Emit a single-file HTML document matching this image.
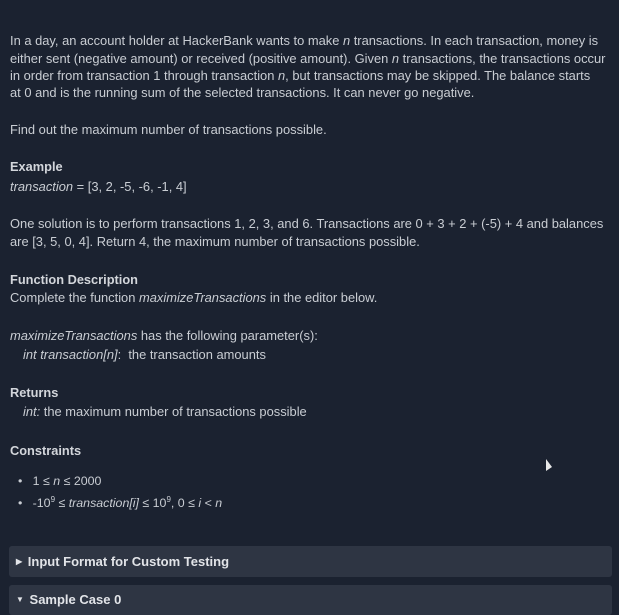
<!DOCTYPE html>
<html><head><style>
body{margin:0;width:619px;height:605px;background:#1b2230;overflow:hidden;font-family:"Liberation Sans",sans-serif;color:#c9cdd3;font-size:12.9px;position:relative}
.l{position:absolute;left:10px;white-space:nowrap;line-height:16px}
.b{font-weight:bold;color:#d3d6db;font-size:12.8px}
i{font-style:italic}
.box{position:absolute;left:9px;width:603px;background:#2e3543;border-radius:3px}
.bt{position:absolute;left:16px;font-weight:bold;color:#e2e4e8;font-size:13px;white-space:nowrap}
.ar{display:inline-block;font-size:8px;vertical-align:2px;margin-right:2px}
sup{font-size:8px;vertical-align:5px;line-height:0}
</style></head><body>
<div class="l" style="top:33px">In a day, an account holder at HackerBank wants to make <i>n</i> transactions. In each transaction, money is</div>
<div class="l" style="top:51px">either sent (negative amount) or received (positive amount). Given <i>n</i> transactions, the transactions occur</div>
<div class="l" style="top:68px">in order from transaction 1 through transaction <i>n</i>, but transactions may be skipped. The balance starts</div>
<div class="l" style="top:85px">at 0 and is the running sum of the selected transactions. It can never go negative.</div>
<div class="l" style="top:122px">Find out the maximum number of transactions possible.</div>
<div class="l b" style="top:159px">Example</div>
<div class="l" style="top:179px"><i>transaction</i> = [3, 2, -5, -6, -1, 4]</div>
<div class="l" style="top:216px">One solution is to perform transactions 1, 2, 3, and 6. Transactions are 0 + 3 + 2 + (-5) + 4 and balances</div>
<div class="l" style="top:234px">are [3, 5, 0, 4]. Return 4, the maximum number of transactions possible.</div>
<div class="l b" style="top:272px">Function Description</div>
<div class="l" style="top:290px">Complete the function <i>maximizeTransactions</i> in the editor below.</div>
<div class="l" style="top:328px"><i>maximizeTransactions</i> has the following parameter(s):</div>
<div class="l" style="top:347px;left:23px"><i>int transaction[n]</i>:&nbsp; the transaction amounts</div>
<div class="l b" style="top:385px">Returns</div>
<div class="l" style="top:404px;left:23px"><i>int:</i> the maximum number of transactions possible</div>
<div class="l b" style="top:443px">Constraints</div>
<div class="l" style="top:473px;left:18px;font-size:12.4px">•&nbsp;&nbsp; 1 ≤ <i>n</i> ≤ 2000</div>
<div class="l" style="top:495px;left:18px;font-size:12.4px">•&nbsp;&nbsp; -10<sup>9</sup> ≤ <i>transaction[i]</i> ≤ 10<sup>9</sup>, 0 ≤ <i>i</i> &lt; <i>n</i></div>
<div style="position:absolute;left:546px;top:459px;width:0;height:0;border-left:6px solid #e8e8e8;border-bottom:4px solid transparent;border-top:8px solid transparent"></div>
<div class="box" style="top:546px;height:31px"><div class="bt" style="top:8px;left:7px"><span class="ar">▶</span> Input Format for Custom Testing</div></div>
<div class="box" style="top:585px;height:30px"><div class="bt" style="top:7px;left:7px"><span class="ar">▼</span> Sample Case 0</div></div>
</body></html>
